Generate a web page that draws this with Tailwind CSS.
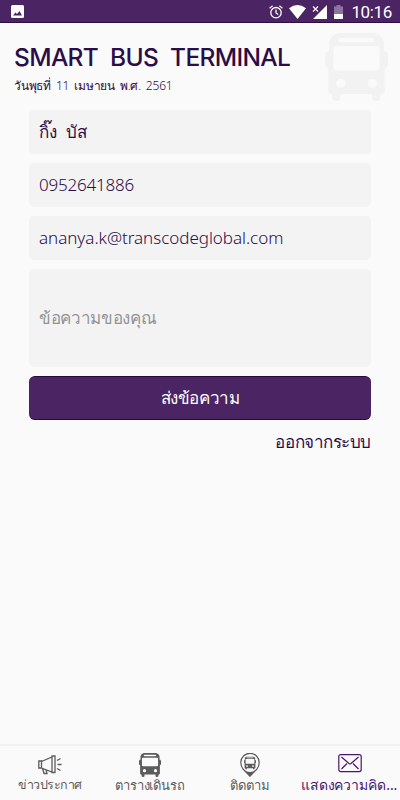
<!DOCTYPE html>
<html lang="th">

<head>
    <meta charset="UTF-8">
    <meta name="viewport" content="width=device-width, initial-scale=1.0">
    <title>Smart Bus Terminal</title>
    <script src="https://cdn.jsdelivr.net/npm/@tailwindcss/browser@4"></script>
</head>

<body class="bg-[#fafafa] font-['Noto_Sans',sans-serif] text-[#2b0d47]">
    <!-- Bus shape shared by the header and the tabs -->
    <svg class="hidden">
        <symbol id="bus" viewBox="0 0 60 67" preserveAspectRatio="none">
            <path fill="currentColor" fill-rule="evenodd"
                d="M13 0H47Q55 2 56 9V18Q60 18 60 23V31Q60 34 57 34V58Q57 60 54 60H53V64Q53 67 49 67Q45 67 45 64V60H15V64Q15 67 11 67Q7 67 7 64V60H6Q3 60 3 58V34Q0 34 0 31V23Q0 18 4 18V9Q5 2 13 0ZM15 5Q13 5 13 7T15 9H45Q47 9 47 7T45 5ZM10 13Q8 13 8 16V34Q8 37 11 37H49Q52 37 52 34V16Q52 13 50 13ZM15 45A4.500 4.500 0 1 0 15 54A4.500 4.500 0 1 0 15 45ZM45 45A4.500 4.500 0 1 0 45 54A4.500 4.500 0 1 0 45 45Z" />
        </symbol>
    </svg>

    <div class="w-[400px] h-[800px] flex flex-col overflow-hidden">
        <!-- Status bar -->
        <div class="h-[23px] shrink-0 bg-[#4b2563] border-b border-[#2c0c45] flex items-center justify-between pl-[11px] pr-2 text-white">
            <svg class="w-[13px] h-[13px] mt-px" viewBox="0 0 13 13">
                <rect width="13" height="13" rx="1.500" fill="#fff" />
                <path d="M2 10.500L4.500 7.500L6 9L8.500 6L11 10.500Z" fill="#4b2563" />
            </svg>
            <div class="flex items-center">
                <svg class="w-[14px] h-[14px] mr-[6px] mt-0.5" viewBox="0 0 14 14" fill="none" stroke="#fff" stroke-width="1.300">
                    <circle cx="7" cy="7.700" r="5.200" />
                    <path d="M7 4.500V8L9.300 9.500M.6 3.200L3.600 .8M13.400 3.200L10.400 .8" />
                </svg>
                <svg class="w-[17px] h-[14px] mr-[6px] mt-0.5" viewBox="0 0 17 14">
                    <path d="M0 3.200Q8.500 -3 17 3.200L8.500 14Z" fill="#fff" />
                </svg>
                <svg class="w-[15px] h-[14px] mr-[7px] mt-0.5" viewBox="0 0 15 14">
                    <path d="M15 0V14H1Z" fill="#fff" />
                    <path d="M1 1.500L6 6.500M6 1.500L1 6.500" stroke="#fff" stroke-width="1.100" />
                </svg>
                <svg class="w-[9px] h-[14px] mr-2 mt-0.5" viewBox="0 0 9 14">
                    <path d="M2.500 0H6.500V1.500H9V9H0V1.500H2.500Z" fill="#8e759e" />
                    <path d="M0 9H9V14H0Z" fill="#fff" />
                </svg>
                <span class="font-['Roboto'] text-[17px] leading-[22px] tracking-[-0.35px] mt-0.5">10:16</span>
            </div>
        </div>

        <!-- Header -->
        <header class="h-[87px] shrink-0 flex justify-between pl-[14px] pr-[12px]">
            <div class="pt-[18px]">
                <h1 class="font-['Inter'] text-[24.5px] leading-[32px] font-medium whitespace-nowrap tracking-[-0.65px] [word-spacing:6px]">SMART BUS TERMINAL</h1>
                <p class="text-[12px] leading-[20px] mt-[3px] font-light whitespace-nowrap tracking-[-0.2px] [word-spacing:2px]">วันพุธที่ 11 เมษายน พ.ศ. 2561</p>
            </div>
            <svg class="w-[63px] h-[68px] mt-[10px] shrink-0 text-[#f2f2f2]">
                <use href="#bus" width="63" height="68" />
            </svg>
        </header>

        <!-- Feedback form -->
        <main class="flex-1 flex flex-col px-[29px] text-[17px] font-light">
            <div class="h-11 mb-[9px] shrink-0 rounded-[5px] bg-[#f3f3f3] flex items-center px-[10px] [word-spacing:5px]">กิ๊ง บัส</div>
            <div class="h-11 mb-[9px] shrink-0 rounded-[5px] bg-[#f3f3f3] flex items-center px-[10px] tracking-[-0.2px]">0952641886</div>
            <div class="h-11 mb-[9px] shrink-0 rounded-[5px] bg-[#f3f3f3] flex items-center px-[10px] tracking-[-0.03px]">ananya.k@transcodeglobal.com</div>
            <div class="h-[98px] mb-[9px] shrink-0 rounded-[5px] bg-[#f3f3f3] flex items-center px-[10px] tracking-[-0.35px] text-[#939393]">ข้อความของคุณ</div>
            <button class="h-11 shrink-0 rounded-[6px] bg-[#4b2563] border-y border-[#26083b] text-white tracking-[-0.4px]">ส่งข้อความ</button>
            <a class="self-end mt-[9px] tracking-[-0.45px]">ออกจากระบบ</a>
        </main>

        <!-- Tabs -->
        <nav class="h-[56px] shrink-0 border-t-2 border-[#f2f2f2] grid grid-cols-4 text-[13px] text-[#5c5c5c] whitespace-nowrap">
            <div class="flex flex-col items-center">
                <svg class="w-6 h-6 mt-[7px]" viewBox="0 0 24 24" fill="none" stroke="currentColor" stroke-width="1.300">
                    <path d="M.8 8H3.500V15H.8ZM3.500 8.500L14 4V19L3.500 15M14 3H17V19.500H14ZM4.500 15.500L6 20.500H9L8 17M19 7.500L22.500 5.500M19.500 11.500H23.500M19 15.500L22.500 17.500" />
                </svg>
                <span class="-mt-0.5 leading-5 font-light text-[12.5px] tracking-[-0.45px]">ข่าวประกาศ</span>
            </div>
            <div class="flex flex-col items-center">
                <svg class="w-[22px] h-6 mt-[7px]">
                    <use href="#bus" width="22" height="24" />
                </svg>
                <span class="-mt-0.5 leading-5 font-light tracking-[-0.1px]">ตารางเดินรถ</span>
            </div>
            <div class="flex flex-col items-center">
                <svg class="w-6 h-6 mt-[7px]" viewBox="0 0 24 24">
                    <path d="M4.500 15.500Q8 19 12 19T19.500 15.500L12 24Z" fill="currentColor" />
                    <path d="M12 23L5 16Q2.800 13 2.800 9.500A9.200 9.200 0 0 1 21.200 9.500Q21.200 13 19 16Z" fill="none" stroke="currentColor" stroke-width="1.200" />
                    <use href="#bus" x="6" y="3.500" width="12" height="13" />
                </svg>
                <span class="-mt-0.5 leading-5 font-light">ติดตาม</span>
            </div>
            <div class="flex flex-col items-center text-[#4b1472]">
                <svg class="w-6 h-6 mt-[7px]" viewBox="0 0 24 24" fill="none" stroke="currentColor" stroke-width="1.200">
                    <rect x=".8" y="1.600" width="22.400" height="17" rx="2" />
                    <path d="M3.500 4L11 10.500Q12 11.300 13 10.500L20.500 4M3.500 16L9 10.500M20.500 16L15 10.500" />
                </svg>
                <span class="-mt-0.5 -ml-0.5 leading-5 text-[14px] tracking-[-0.05px]">แสดงความคิด...</span>
            </div>
        </nav>
    </div>
</body>

</html>
